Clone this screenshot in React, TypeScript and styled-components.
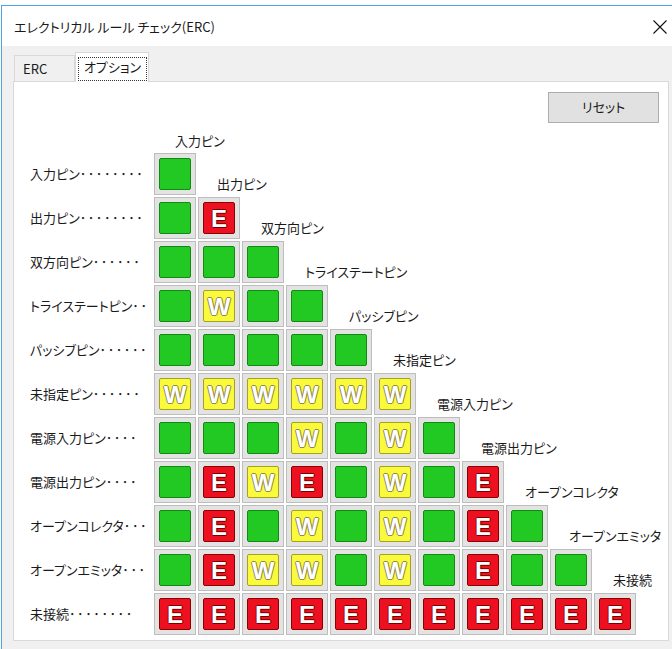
import React from "react";
import styled, { createGlobalStyle } from "styled-components";

type Kind = "G" | "E" | "W";

const GlobalStyle = createGlobalStyle`
  html, body { margin: 0; padding: 0; background: #ffffff; }
  body {
    font-family: "Noto Sans CJK JP", "Noto Sans", sans-serif;
    font-size: 13px;
    color: #1a1a1a;
    font-feature-settings: "palt";
  }
  #root { width: 672px; height: 649px; overflow: hidden; }
`;

const Page = styled.div`
  width: 672px;
  height: 649px;
  box-sizing: border-box;
  padding: 5px 0 0 1px;
  overflow: hidden;
`;

const Window = styled.div`
  height: 644px;
  box-sizing: border-box;
  border-top: 1px solid #4ea3e2;
  border-left: 1px solid #4ea3e2;
  background: #f0f0f0;
  display: flex;
  flex-direction: column;
`;

const TitleBar = styled.div`
  height: 40px;
  flex: none;
  background: #ffffff;
  display: flex;
  align-items: center;
  justify-content: space-between;
  padding: 2px 5px 0 12px;
  box-sizing: border-box;
`;

const Title = styled.span`
  font-size: 13px;
  line-height: 16px;
`;

const CloseIcon = styled.svg`
  width: 14px;
  height: 14px;
  display: block;
`;

const TabControl = styled.div`
  flex: 1;
  display: flex;
  flex-direction: column;
  margin: 0 3px 8px 11px;
`;

const TabStrip = styled.div`
  height: 35px;
  flex: none;
  display: flex;
  align-items: flex-end;
  padding-left: 1px;
`;

const Tab = styled.div<{ $active?: boolean }>`
  box-sizing: border-box;
  position: relative;
  display: flex;
  align-items: ${(p) => (p.$active ? "stretch" : "center")};
  border: 1px solid #d9d9d9;
  border-bottom: none;
  background: ${(p) => (p.$active ? "#ffffff" : "#f0f0f0")};
  height: ${(p) => (p.$active ? "30px" : "26px")};
  margin-bottom: ${(p) => (p.$active ? "-1px" : "0")};
  z-index: ${(p) => (p.$active ? 1 : 0)};
  width: ${(p) => (p.$active ? "74px" : "61px")};
  padding: ${(p) => (p.$active ? "4px 1px 1px 2px" : "0 0 0 8px")};
  line-height: 16px;
`;

const FocusRect = styled.div`
  flex: 1;
  border: 1px dotted #333;
  display: flex;
  align-items: center;
  justify-content: center;
  padding-bottom: 5px;
`;

const Panel = styled.div`
  flex: 1;
  background: #ffffff;
  border: 1px solid #d9d9d9;
  padding: 10px 9px 0 16px;
  display: flex;
  flex-direction: column;
`;

const ButtonRow = styled.div`
  display: flex;
  justify-content: flex-end;
`;

const Button = styled.button`
  width: 111px;
  height: 31px;
  border: 1px solid #adadad;
  background: #e1e1e1;
  font-family: inherit;
  font-size: 13px;
  font-feature-settings: "palt";
  color: #1a1a1a;
  padding: 0 0 2px 0;
`;

const Matrix = styled.div`
  margin-top: 10px;
  display: flex;
  flex-direction: column;
  gap: 2px;
`;

const TopHeader = styled.div`
  line-height: 16px;
  padding-left: 145px;
  margin-bottom: 2px;
  white-space: nowrap;
`;

const Row = styled.div`
  height: 42px;
  display: flex;
  align-items: center;
  gap: 2px;
`;

const RowLabel = styled.div`
  width: 122px;
  flex: none;
  white-space: nowrap;
  line-height: 16px;
  overflow: visible;
`;

const Dots = styled.span`
  letter-spacing: 1.6px;
`;

const ColHeader = styled.div`
  align-self: flex-end;
  margin-left: 19px;
  margin-bottom: 3px;
  line-height: 16px;
  white-space: nowrap;
`;

const Cell = styled.div`
  width: 42px;
  height: 42px;
  flex: none;
  box-sizing: border-box;
  border: 1px solid #bdbdbd;
  background: #e3e3e3;
  display: flex;
  align-items: center;
  justify-content: center;
`;

const chip: Record<Kind, { bg: string; border: string; outline: string }> = {
  G: { bg: "#22c922", border: "#138813", outline: "transparent" },
  E: { bg: "#ec1020", border: "#8c0000", outline: "#7a0000" },
  W: { bg: "#fafa3c", border: "#a8a020", outline: "#8f8650" },
};

const Chip = styled.div<{ $kind: Kind }>`
  width: 32px;
  height: 32px;
  box-sizing: border-box;
  border: 1px solid ${(p) => chip[p.$kind].border};
  border-radius: 2px;
  background: ${(p) => chip[p.$kind].bg};
  display: flex;
  align-items: center;
  justify-content: center;
  font-family: "Liberation Sans", Arial, sans-serif;
  font-weight: bold;
  font-size: 24px;
  line-height: 1;
  color: #ffffff;
  text-shadow: ${(p) => {
    const c = chip[p.$kind].outline;
    return `1px 0 0 ${c}, -1px 0 0 ${c}, 0 1px 0 ${c}, 0 -1px 0 ${c}`;
  }};
  padding-top: 1px;
`;

const names = [
  "入力ピン",
  "出力ピン",
  "双方向ピン",
  "トライステートピン",
  "パッシブピン",
  "未指定ピン",
  "電源入力ピン",
  "電源出力ピン",
  "オープンコレクタ",
  "オープンエミッタ",
  "未接続",
];

const dotCounts = [8, 8, 6, 2, 6, 6, 4, 4, 3, 3, 8];

const matrix: string[] = [
  "G",
  "GE",
  "GGG",
  "GWGG",
  "GGGGG",
  "WWWWWW",
  "GGGWGWG",
  "GEWEGWGE",
  "GEGWGWGEG",
  "GEWWGWGEGG",
  "EEEEEEEEEEE",
];

export default function App() {
  return (
    <>
      <GlobalStyle />
      <Page>
        <Window>
          <TitleBar>
            <Title>エレクトリカル ルール チェック(ERC)</Title>
            <CloseIcon viewBox="0 0 14 14">
              <path d="M0.5 0.5 L13.5 13.5 M13.5 0.5 L0.5 13.5" stroke="#111" strokeWidth="1.1" fill="none" />
            </CloseIcon>
          </TitleBar>
          <TabControl>
            <TabStrip>
              <Tab>ERC</Tab>
              <Tab $active>
                <FocusRect>オプション</FocusRect>
              </Tab>
            </TabStrip>
            <Panel>
              <ButtonRow>
                <Button>リセット</Button>
              </ButtonRow>
              <Matrix>
                <TopHeader>{names[0]}</TopHeader>
                {matrix.map((row, i) => (
                  <Row key={names[i]}>
                    <RowLabel>
                      {names[i]}
                      <Dots>{"･".repeat(dotCounts[i])}</Dots>
                    </RowLabel>
                    {row.split("").map((k, j) => (
                      <Cell key={j}>
                        <Chip $kind={k as Kind}>{k === "G" ? "" : k}</Chip>
                      </Cell>
                    ))}
                    {i + 1 < names.length && <ColHeader>{names[i + 1]}</ColHeader>}
                  </Row>
                ))}
              </Matrix>
            </Panel>
          </TabControl>
        </Window>
      </Page>
    </>
  );
}
